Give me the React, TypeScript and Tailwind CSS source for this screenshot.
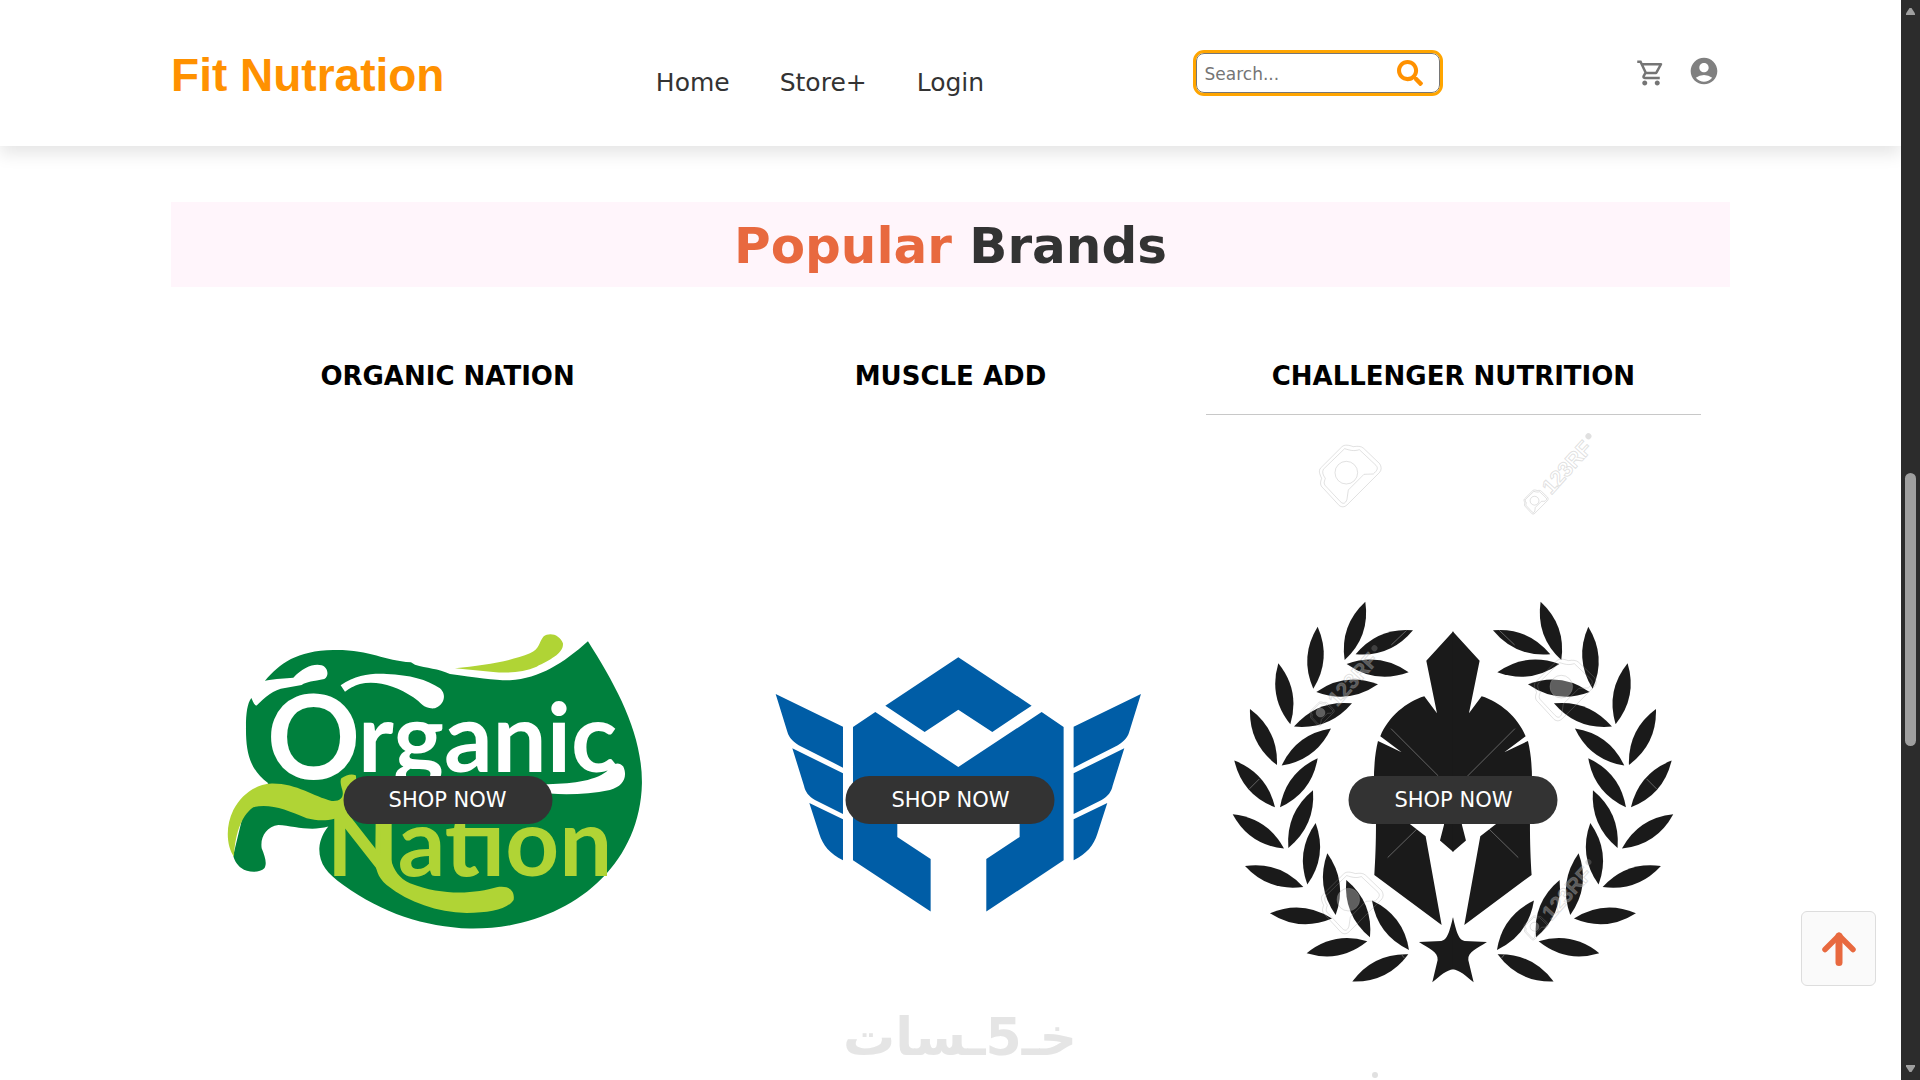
import type { ReactNode } from "react";
import { FaSearch } from "react-icons/fa";
import { MdAccountCircle, MdOutlineShoppingCart } from "react-icons/md";

const GREEN = "#00803d";
const LIME = "#b0d435";
const INK = "#1a1a1a";

const NAV_LINKS = ["Home", "Store+", "Login"];

// tip x, tip y, base x, base y for every leaf on the left half of the wreath
const LEAVES = [
  [436, 35, 374, 210],
  [579, 121, 407, 193],
  [566, 247, 380, 222],
  [293, 110, 280, 296],
  [474, 283, 289, 306],
  [175, 220, 211, 403],
  [396, 340, 222, 410],
  [90, 357, 171, 525],
  [333, 416, 185, 527],
  [43, 512, 165, 652],
  [293, 505, 180, 652],
  [38, 673, 192, 776],
  [279, 601, 205, 774],
  [75, 828, 250, 891],
  [287, 699, 262, 884],
  [150, 970, 336, 986],
  [322, 790, 347, 975],
  [260, 1090, 442, 1054],
  [379, 870, 450, 1042],
  [397, 1175, 565, 1093],
  [456, 932, 567, 1080],
];

function leafPath([x1, y1, x2, y2]: number[]) {
  const length = Math.hypot(x2 - x1, y2 - y1);
  const nx = (-(y2 - y1) / length) * 49;
  const ny = ((x2 - x1) / length) * 49;
  const mx = (x1 + x2) / 2;
  const my = (y1 + y2) / 2;
  return `M${x1} ${y1}Q${mx + nx} ${my + ny} ${x2} ${y2}Q${mx - nx} ${my - ny} ${x1} ${y1}Z`;
}

function OrganicNationLogo() {
  return (
    <svg viewBox="200 415 495 770" className="w-full" role="img" aria-label="Organic Nation">
      <g transform="translate(210 610) scale(0.33333)">
        <path
          fill={GREEN}
          d="M165 212C210 160 260 122 370 120C480 118 520 152 603 157L615 164C650 175 685 175 720 192C800 203 860 212 900 211C990 205 1060 160 1134 94C1220 230 1297 370 1296 520C1290 790 1050 960 780 956C640 950 520 910 400 825C350 790 327 760 328 715C330 690 340 668 355 650C300 665 250 648 205 645C170 650 150 680 155 715C165 740 172 760 163 775C150 790 110 788 95 775C80 765 70 745 70 735L110 570L175 520C120 480 107 430 108 350C108 310 112 280 124 264Z"
        />
        <path
          fill="#fff"
          d="M100 214L165 212C200 205 225 205 250 203C280 172 310 160 335 166C355 172 358 200 343 207C310 215 290 214 275 225L225 234C190 238 165 262 140 287C133 287 128 272 124 264L90 270Z"
        />
        <path
          fill="#fff"
          d="M392 226C440 195 480 190 530 192C600 195 650 208 690 235C712 255 702 285 675 295C640 298 635 278 610 262C560 228 500 210 450 222C430 228 420 235 405 245Z"
        />
        <path
          fill="#fff"
          d="M1000 523C1080 523 1150 515 1190 485C1205 462 1225 452 1240 470C1254 500 1240 530 1200 540C1140 552 1080 555 1020 551Z"
        />
        <path
          fill={LIME}
          d="M735 175C820 165 900 155 960 130C990 115 985 100 1000 80C1020 65 1050 75 1059 100C1062 130 1020 150 980 170C940 188 890 190 850 186Z"
        />
        <path
          fill={LIME}
          d="M72 740C50 710 45 650 70 600C95 555 130 525 185 521C260 520 310 560 365 573C395 575 402 560 397 540C392 525 390 512 394 505C410 495 425 490 438 497L440 540L410 610C370 635 330 635 290 625C230 600 180 580 130 592C90 620 75 680 72 740Z"
        />
        <path
          fill={LIME}
          d="M497 640L535 640C535 720 535 790 600 820C700 860 800 850 860 832C900 825 915 845 911 870C890 900 840 908 770 909C680 905 600 880 530 825C500 800 495 770 496 740Z"
        />
        <g className="font-[Lato,sans-serif] font-bold">
          <text x="170" y="506" fontSize="348" fill="#fff">
            O
          </text>
          <text x="444" y="486" fontSize="288" fill="#fff">
            rganic
          </text>
          <text x="350" y="797" fontSize="282" fill={LIME}>
            Nation
          </text>
        </g>
      </g>
    </svg>
  );
}

function MuscleWing() {
  return (
    <>
      <path d="M47 162L249 260V383L125 320C100 307 88 295 82 275Z" />
      <path d="M97 325L249 400V522L165 480C145 468 136 455 132 437Z" />
      <path d="M148 489L249 538V661C210 642 188 615 178 582Z" />
    </>
  );
}

function MuscleAddLogo() {
  return (
    <svg viewBox="703 415 495 770" className="w-full" role="img" aria-label="Muscle Add">
      <g transform="translate(760 640) scale(0.33333)" fill="#005da6">
        <path d="M595 52L815 197L697 276L595 209L494 276L376 197Z" />
        <path d="M279 261L346 216L595 381L845 216L911 261V661L679 815V657L779 591V480H412V591L512 657V815L279 661Z" />
        <MuscleWing />
        <g transform="translate(1190 0) scale(-1 1)">
          <MuscleWing />
        </g>
      </g>
    </svg>
  );
}

function CameraMark({ x, y, scale = 0.33333 }: { x: number; y: number; scale?: number }) {
  return (
    <g
      transform={`translate(${x} ${y}) scale(${scale}) translate(-452 -408)`}
      fill="none"
      stroke="#999"
      strokeOpacity="0.3"
      strokeWidth={1 / scale}
    >
      <path d="M363 385L428 320C436 313 448 315 462 320C475 318 485 318 493 325L541 371C547 380 547 390 541 397L443 495C435 502 428 502 420 497L372 445C362 437 362 428 367 415C360 400 358 393 363 385Z" />
      <path d="M372 388L436 326C450 330 462 335 480 329L530 376C538 385 533 392 522 402L494 403L447 450L443 478C438 493 430 492 423 485L378 437C372 430 375 425 378 415C371 405 368 398 372 388Z" />
      <circle cx="441" cy="398" r="34" fill="#fff" fillOpacity="0.3" />
    </g>
  );
}

function StockMark({ x, y }: { x: number; y: number }) {
  return (
    <>
      <CameraMark x={x} y={y} scale={0.13} />
      <g transform={`translate(${x} ${y}) rotate(-48)`}>
        <text
          x="15"
          y="7"
          fontSize="21"
          fill="#fff"
          fillOpacity="0.3"
          stroke="#999"
          strokeOpacity="0.3"
          strokeWidth="1"
          className="font-['Liberation_Sans',sans-serif] font-bold"
        >
          123RF
        </text>
        <circle cx="84" cy="-5" r="3" fill="#999" fillOpacity="0.3" />
      </g>
    </>
  );
}

function SpartanHalf() {
  return (
    <>
      {LEAVES.map((leaf) => (
        <path key={leaf.join()} d={leafPath(leaf)} />
      ))}
      <path d="M700 124L619 212L651 370L613 319C560 335 505 380 481 439L545 487L474 453C460 510 460 580 464 640L468 700C468 760 466 810 463 855L665 1005L617 739L560 695V660H676L672 705L660 752L700 786Z" />
      <path d="M700 982C690 1012 686 1050 664 1053L597 1056C625 1075 655 1085 653 1110L637 1177C660 1158 680 1140 700 1138Z" />
      <path
        d="M513 416L655 558M590 718L503 803M88 597L118 567M514 165L560 121M544 1093L553 1104"
        fill="none"
        stroke="#8a8a8a"
        strokeWidth="2"
      />
    </>
  );
}

function ChallengerLogo() {
  return (
    <svg viewBox="1206 415 495 770" className="w-full" role="img" aria-label="Challenger Nutrition">
      <g transform="translate(1220 590) scale(0.33333)" fill={INK}>
        <SpartanHalf />
        <g transform="translate(1398 0) scale(-1 1)">
          <SpartanHalf />
        </g>
      </g>
      <CameraMark x={1350} y={476} />
      <CameraMark x={1565} y={690} />
      <CameraMark x={1352} y={903} />
      <StockMark x={1536} y={502} />
      <StockMark x={1322} y={714} />
      <StockMark x={1536} y={928} />
      <circle cx="1375" cy="1075" r="3" fill="#999" fillOpacity="0.3" />
    </svg>
  );
}

function BrandCard({ name, ruled, children }: { name: string; ruled?: boolean; children: ReactNode }) {
  return (
    <article className="flex flex-col">
      <h2 className="pb-[22px] text-center text-[26px] leading-[31px] font-bold text-black uppercase">{name}</h2>
      <div className={ruled ? "relative border-t border-[#c8c8c8]" : "relative border-t border-transparent"}>
        {children}
        <button
          type="button"
          className="absolute top-1/2 left-1/2 h-12 w-[209px] -translate-x-1/2 -translate-y-1/2 rounded-full bg-[#333] pt-0.5 text-[21px] text-white"
        >
          SHOP NOW
        </button>
      </div>
    </article>
  );
}

function Header() {
  return (
    <header className="relative flex h-[146px] shrink-0 items-center justify-between bg-white px-[9%] shadow-[0_8px_16px_rgba(0,0,0,0.1)]">
      <a href="#" className="pt-1 font-['Liberation_Sans',sans-serif] text-[46px] font-bold text-[#ff9100]">
        Fit Nutration
      </a>
      <nav className="flex gap-[50px] px-[25px] pt-5 text-[25px] text-[#333]">
        {NAV_LINKS.map((label) => (
          <a key={label} href="#">
            {label}
          </a>
        ))}
      </nav>
      <form className="flex h-10 w-[244px] items-center rounded-lg border border-[#767676] px-2 outline-3 outline-[#ffa500]">
        <input
          type="search"
          aria-label="Search"
          placeholder="Search..."
          className="min-w-0 flex-1 pt-[3px] text-[17px] outline-none placeholder:text-[#757575]"
        />
        <button type="button" aria-label="Submit search" className="mr-2 text-[#ff9100]">
          <FaSearch size={26} />
        </button>
      </form>
      <div className="flex gap-[22px] px-[10px]">
        <button type="button" aria-label="Cart" className="text-[#757575]">
          <MdOutlineShoppingCart size={30} />
        </button>
        <button type="button" aria-label="Account" className="pb-1 text-[#808080]">
          <MdAccountCircle size={32} />
        </button>
      </div>
    </header>
  );
}

function ScrollBar() {
  return (
    <div className="flex w-[19px] shrink-0 flex-col items-center bg-[#2c2c2c] py-2" aria-hidden="true">
      <svg width="9" height="7" viewBox="0 0 9 7" fill="#9f9f9f">
        <path d="M3.5 0h2L9 5.5V7H0V5.5Z" />
      </svg>
      <div className="flex w-full flex-1 flex-col items-center">
        <div className="h-[43.6%]" />
        <div className="h-[26%] w-[11px] rounded-full bg-[#9f9f9f]" />
      </div>
      <svg width="9" height="7" viewBox="0 0 9 7" fill="#9f9f9f">
        <path d="M3.5 7h2L9 1.5V0H0V1.5Z" />
      </svg>
    </div>
  );
}

export default function App() {
  return (
    <div className="relative flex h-screen overflow-hidden bg-white font-['DejaVu_Sans',Verdana,sans-serif]">
      <div className="flex min-w-0 flex-1 flex-col overflow-hidden">
        <Header />
        <main className="flex flex-col px-[9%] pt-14">
          <h1 className="bg-[#fff5fb] pt-1 text-center text-[50px] leading-[81px] font-bold text-[#333]">
            <span className="text-[#e8693f]">Popular</span> Brands
          </h1>
          <section className="grid grid-cols-3 gap-2 px-[29px] pt-[74px]">
            <BrandCard name="Organic Nation">
              <OrganicNationLogo />
            </BrandCard>
            <BrandCard name="Muscle Add">
              <MuscleAddLogo />
            </BrandCard>
            <BrandCard name="Challenger Nutrition" ruled>
              <ChallengerLogo />
            </BrandCard>
          </section>
        </main>
      </div>
      <ScrollBar />

      <button
        type="button"
        aria-label="Back to top"
        className="absolute right-11 bottom-[94px] flex size-[75px] items-center justify-center rounded-md border border-[#ddd] bg-[#fafafa] text-[#e8693f]"
      >
        <svg width="34" height="34" viewBox="0 0 34 34" fill="none" stroke="currentColor" strokeLinejoin="round">
          <path d="M17 4V30.500" strokeWidth="7" strokeLinecap="round" />
          <path d="M3 17.500L17 3.500L31 17.500" strokeWidth="5.500" strokeLinecap="round" />
        </svg>
      </button>

      <span
        lang="ar"
        dir="rtl"
        className="absolute bottom-2 left-1/2 -translate-x-1/2 text-[52px] leading-[70px] font-bold whitespace-nowrap text-[#e5e5e5]"
      >
        خـ5ـسات
      </span>
    </div>
  );
}
